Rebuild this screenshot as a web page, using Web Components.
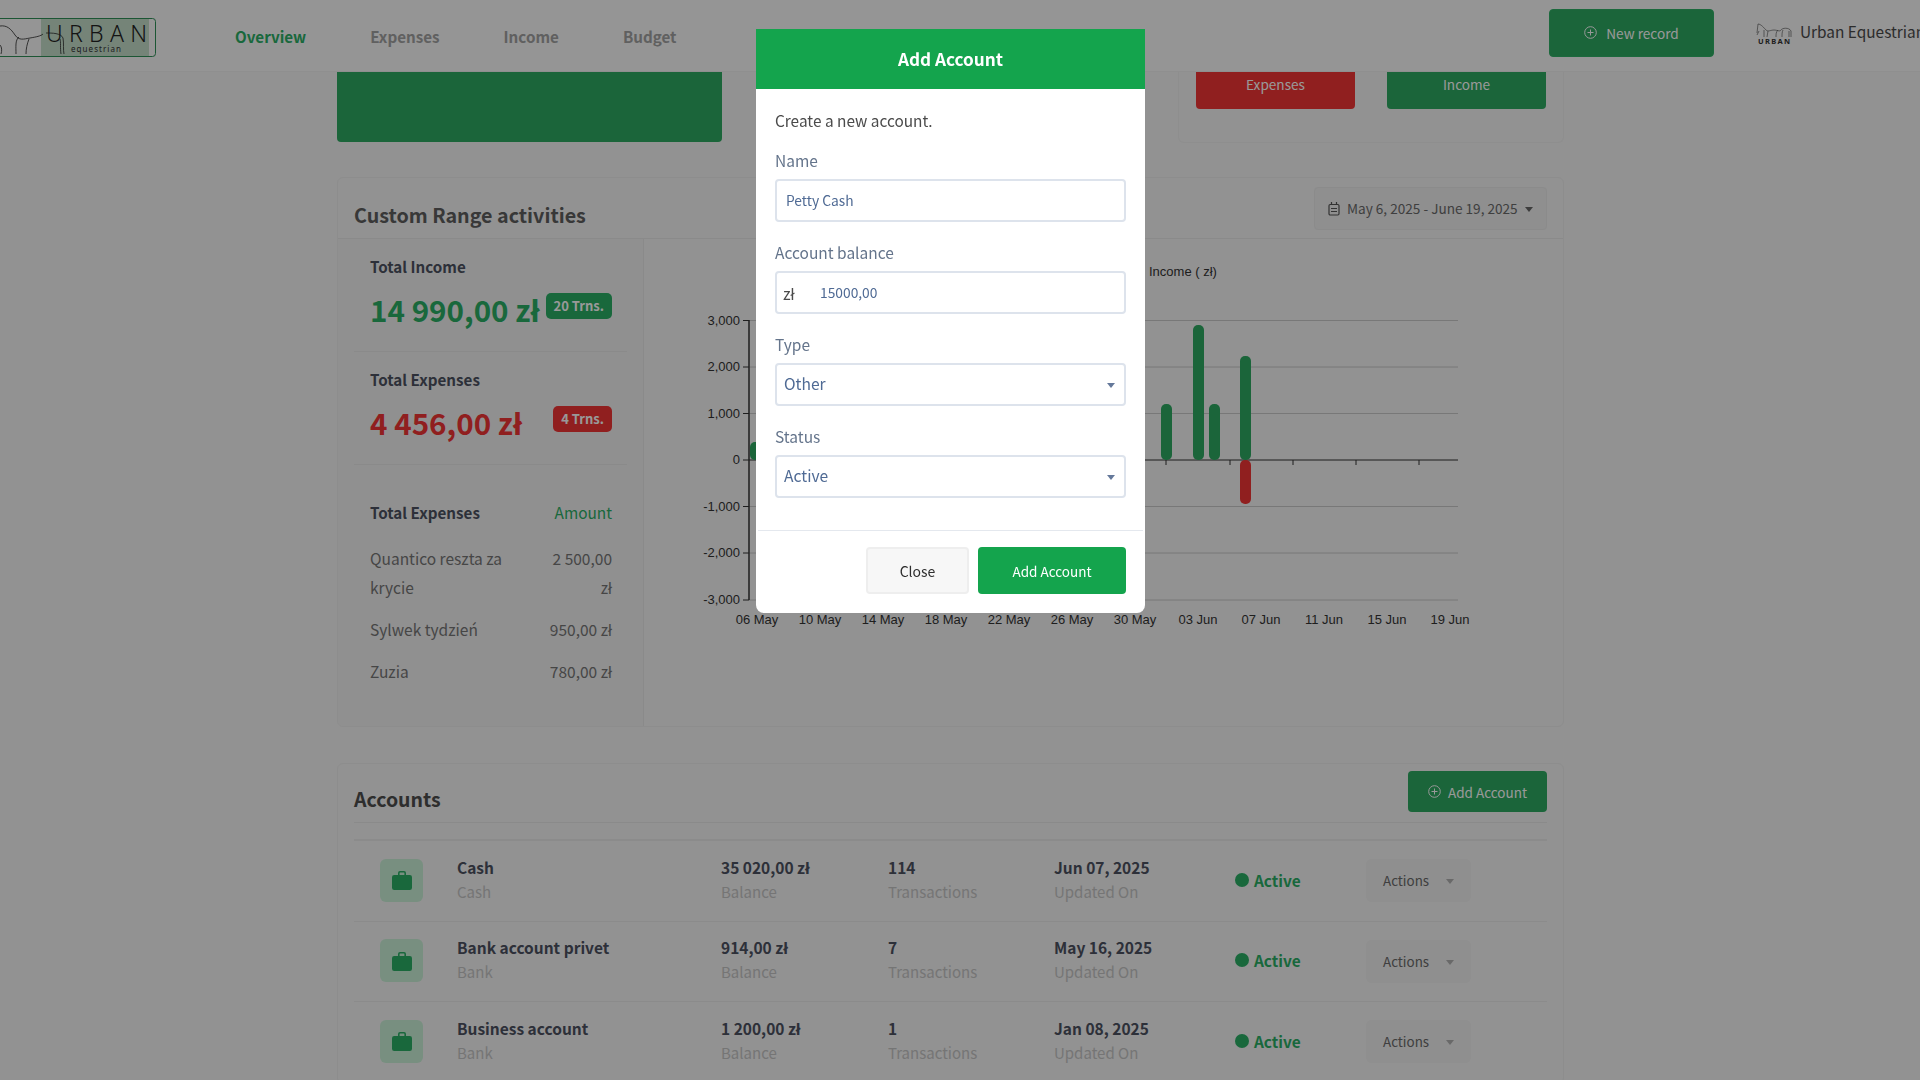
<!DOCTYPE html>
<html lang="en">
<head>
<meta charset="utf-8">
<title>Urban Equestrian - Overview</title>
<style>
    html, body { margin: 0; height: 100%; overflow: hidden; }
    body {
        background: #f3f3f3;
        color: #3f4254;
        font-family: "Noto Sans CJK SC", "Noto Sans", sans-serif;
        font-size: 16px;
    }
</style>
</head>
<body>
<top-bar></top-bar>
<main-page></main-page>
<add-account-modal></add-account-modal>

<script>
const GREEN = "#14a44d";
const PAGE_GREEN = "#2da861";
const TEXT_GREEN = "#2aad65";
const RED = "#f13535";
const PLUS_ICON = `<svg width="13" height="13" viewBox="0 0 13 13" fill="none" stroke="currentColor" stroke-width="1"><circle cx="6.5" cy="6.5" r="5.8"/><path d="M6.5 3.5v6M3.5 6.5h6"/></svg>`;

class TopBar extends HTMLElement {
    constructor() {
        super();
        const shadow = this.attachShadow({ mode: "open" });
        const temp = document.createElement("template");
        temp.innerHTML = `
            <style>
                :host {
                    display: flex;
                    align-items: center;
                    position: relative;
                    z-index: 2;
                    box-sizing: border-box;
                    height: 72px;
                    background: #f8f8f8;
                    border-bottom: 1px solid #efefef;
                    overflow: hidden;
                    white-space: nowrap;
                }
                .logo { flex: none; width: 156px; height: 39px; margin-top: 3px; }
                nav { display: flex; gap: 64px; margin-left: 79px; flex: 1; }
                nav span { font-size: 15.2px; line-height: 24px; font-weight: 600; color: #a0a0a0; }
                nav span.on { color: ${TEXT_GREEN}; }
                .record {
                    flex: none;
                    box-sizing: border-box;
                    display: flex; align-items: center; justify-content: center; gap: 9px;
                    width: 165px; height: 48px;
                    margin-top: -6px;
                    background: ${PAGE_GREEN};
                    border: 1px solid #2fb066;
                    border-radius: 4px;
                    color: #fff;
                    font-size: 13.6px;
                }
                .user { flex: none; display: flex; align-items: center; margin-left: 42px; width: 164px; }
                .user svg { flex: none; }
                .user span { font-size: 15.4px; line-height: 24px; color: #4a4a4a; margin-left: 8px; margin-top: -10px; }
            </style>
            <svg class="logo" viewBox="0 0 156 39">
                <rect x="41" y="1" width="108" height="37" fill="#c3dcc9"/>
                <rect x="-8" y=".5" width="163.5" height="38" rx="3" fill="none" stroke="#2f8f58" stroke-width="1"/>
                <g fill="none" stroke="#2a2a2a" stroke-width=".8">
                    <path d="M0 8c7-1 11 3 15 9s9 4 15 3 11-2 13-4"/>
                    <path d="M46 15c6 0 15 0 17 5 1 5 0 12 1 16"/>
                    <path d="M0 27c2 2 2 6 1 9"/>
                    <path d="M19 19c-4 3-3 10-3 17"/>
                    <path d="M29 21c-2 5-3 10-3 15"/>
                    <path d="M60 21c1 3 0 9 1 15"/>
                </g>
                <text x="46" y="24" font-family="Noto Sans" font-weight="300" font-size="23" textLength="101" lengthAdjust="spacing" fill="#222">URBAN</text>
                <text x="71" y="33.500" font-family="Noto Sans" font-size="8" textLength="50" lengthAdjust="spacing" fill="#333">equestrian</text>
            </svg>
            <nav><span class="on">Overview</span><span>Expenses</span><span>Income</span><span>Budget</span></nav>
            <div class="record">${PLUS_ICON}<span>New record</span></div>
            <div class="user">
                <svg width="36" height="25" viewBox="0 0 36 25">
                    <g fill="none" stroke="#444" stroke-width=".6">
                        <path d="M1 10 2 1c3 0 6 4 8 6s5 0 8 0 6 2 7 0 8-3 10 1v6"/>
                        <path d="M3 8 1 12M8 7v7M12 8 11 14M22 7c-2 2-2 4-2 7M27 7c-1 2-1 4-1 7M33 8v6"/>
                    </g>
                    <text x="2" y="21" font-family="Noto Sans" font-weight="700" font-size="7.5" textLength="32" lengthAdjust="spacing" fill="#333">URBAN</text>
                </svg>
                <span>Urban Equestrian</span>
            </div>
        `;
        shadow.appendChild(temp.content.cloneNode(true));
    }
}

class SummaryRow extends HTMLElement {
    constructor() {
        super();
        const shadow = this.attachShadow({ mode: "open" });
        const temp = document.createElement("template");
        temp.innerHTML = `
            <style>
                :host { display: block; position: relative; height: 71px; }
                .green {
                    position: absolute; left: 337px; top: 0;
                    box-sizing: border-box;
                    width: 385px; height: 70px;
                    background: ${PAGE_GREEN};
                    border-radius: 0 0 4px 4px;
                }
                .quick {
                    position: absolute; left: 1178px; top: 0;
                    box-sizing: border-box;
                    width: 386px; height: 71px;
                    padding: 0 17px;
                    display: flex; gap: 32px; align-items: flex-start;
                    border: 1px solid #ededed; border-top: 0;
                    border-radius: 0 0 6px 6px;
                }
                .quick span {
                    width: 160px; height: 37px;
                    display: flex; justify-content: center;
                    border-radius: 0 0 4px 4px;
                    color: #fff;
                    font-size: 13.6px;
                    line-height: 25px;
                }
                .red { background: ${RED}; }
                .inc { background: ${PAGE_GREEN}; }
            </style>
            <div class="green"></div>
            <div class="quick"><span class="red">Expenses</span><span class="inc">Income</span></div>
        `;
        shadow.appendChild(temp.content.cloneNode(true));
    }
}

class StatBlock extends HTMLElement {
    static observedAttributes = ["label", "value", "badge", "tone"];

    constructor() {
        super();
        const shadow = this.attachShadow({ mode: "open" });
        const temp = document.createElement("template");
        temp.innerHTML = `
            <style>
                :host {
                    display: block;
                    box-sizing: border-box;
                    height: 113px;
                    padding: 15px 15px 0 16px;
                    border-bottom: 1px solid #e6e6e6;
                    white-space: nowrap;
                }
                .label { font-size: 15.2px; line-height: 24px; font-weight: 600; color: #4b5060; }
                .row { display: flex; justify-content: space-between; margin-top: 11.5px; }
                .value { font-size: 29.6px; line-height: 40px; font-weight: 700; }
                .badge {
                    height: 26px; padding: 0 8px; margin-top: 3px;
                    display: flex; align-items: center;
                    border-radius: 5px;
                    color: #fff;
                    font-size: 13px; font-weight: 700;
                }
            </style>
            <div class="label"></div>
            <div class="row"><div class="value"></div><div class="badge"></div></div>
        `;
        shadow.appendChild(temp.content.cloneNode(true));
    }

    attributeChangedCallback(name, _, newValue) {
        const root = this.shadowRoot;
        if (name == "label") root.querySelector(".label").textContent = newValue;
        if (name == "value") root.querySelector(".value").textContent = newValue;
        if (name == "badge") root.querySelector(".badge").textContent = newValue;
        if (name == "tone") {
            const colour = newValue == "red" ? RED : TEXT_GREEN;
            root.querySelector(".value").style.color = colour;
            root.querySelector(".badge").style.background = colour;
        }
    }
}

class ExpenseRow extends HTMLElement {
    constructor() {
        super();
        const shadow = this.attachShadow({ mode: "open" });
        const temp = document.createElement("template");
        temp.innerHTML = `
            <style>
                :host {
                    display: flex; justify-content: space-between;
                    font-size: 15.5px; line-height: 29px;
                    color: #757575;
                }
                .name { width: 150px; }
                .amount { width: 68px; text-align: right; }
            </style>
            <div class="name"></div><div class="amount"></div>
        `;
        shadow.appendChild(temp.content.cloneNode(true));
    }

    connectedCallback() {
        this.shadowRoot.querySelector(".name").textContent = this.getAttribute("name");
        this.shadowRoot.querySelector(".amount").textContent = this.getAttribute("amount");
    }
}

class IncomeChart extends HTMLElement {
    constructor() {
        super();
        const shadow = this.attachShadow({ mode: "open" });
        const ys = { 3000: 320.5, 2000: 367, 1000: 413.5, 0: 460, "-1000": 506.5, "-2000": 553, "-3000": 600 };
        let grid = "";
        for (const v of [3000, 2000, 1000, 0, -1000, -2000, -3000]) {
            const y = ys[v];
            const label = v.toLocaleString("en-US");
            grid += `<line x1="743" x2="749" y1="${y}" y2="${y}" stroke="#333"/>`;
            grid += `<line x1="749" x2="1458" y1="${y}" y2="${y}" stroke="${v == 0 ? "#333" : "#c8c8c8"}"/>`;
            grid += `<text x="740" y="${y + 4}" text-anchor="end">${label}</text>`;
        }
        const dates = ["06 May", "10 May", "14 May", "18 May", "22 May", "26 May", "30 May", "03 Jun", "07 Jun", "11 Jun", "15 Jun", "19 Jun"];
        let xLabels = "";
        dates.forEach((d, i) => {
            xLabels += `<text x="${757 + i * 63}" y="624" text-anchor="middle">${d}</text>`;
        });
        let ticks = "";
        for (const x of [1166, 1230, 1293, 1356, 1419]) {
            ticks += `<line x1="${x}" x2="${x}" y1="460" y2="465" stroke="#333"/>`;
        }
        const bar = (x, y, h, fill) => `<rect x="${x}" y="${y}" width="11" height="${h}" rx="5" fill="${fill}"/>`;
        const temp = document.createElement("template");
        temp.innerHTML = `
            <style>
                :host { display: block; flex: 1; min-width: 0; }
                svg { display: block; font-family: "Liberation Sans", Arial, sans-serif; font-size: 13px; fill: #333; }
            </style>
            <svg width="920" height="487" viewBox="644 239 920 487">
                <text x="1149" y="276" font-size="13">Income ( zł)</text>
                ${grid}
                <line x1="749" x2="749" y1="320" y2="600" stroke="#333" stroke-width="1.5"/>
                ${ticks}
                ${bar(750, 442, 18, PAGE_GREEN)}
                ${bar(1161, 404, 56, PAGE_GREEN)}
                ${bar(1193, 325, 135, PAGE_GREEN)}
                ${bar(1209, 404, 56, PAGE_GREEN)}
                ${bar(1240, 356, 104, PAGE_GREEN)}
                ${bar(1240, 460, 44, RED)}
                ${xLabels}
            </svg>
        `;
        shadow.appendChild(temp.content.cloneNode(true));
    }
}

class RangeCard extends HTMLElement {
    constructor() {
        super();
        const shadow = this.attachShadow({ mode: "open" });
        const temp = document.createElement("template");
        temp.innerHTML = `
            <style>
                :host {
                    display: block;
                    box-sizing: border-box;
                    width: 1227px; height: 550px;
                    margin: 34px 0 0 337px;
                    border: 1px solid #ebebeb;
                    border-radius: 6px;
                }
                .head {
                    box-sizing: border-box;
                    height: 61px;
                    padding: 9px 16px 0 16px;
                    display: flex; justify-content: space-between; align-items: flex-start;
                    border-bottom: 1px solid #e6e6e6;
                }
                h2 { margin: 13px 0 0; font-size: 19.7px; line-height: 30px; font-weight: 600; color: #5e5e5e; }
                .range {
                    box-sizing: border-box;
                    display: flex; align-items: center; gap: 7px;
                    width: 233px; height: 43px;
                    padding-left: 13px;
                    background: #eeeeee;
                    border: 1px solid #e8e8e8;
                    border-radius: 4px;
                    font-size: 13.6px;
                    color: #6a6a6a;
                    white-space: nowrap;
                }
                .range span { margin-top: -1px; }
                .caret { width: 0; height: 0; border: 4px solid transparent; border-top: 5px solid #666; margin-top: 5px; }
                .body { display: flex; height: 487px; }
                .side {
                    flex: none;
                    box-sizing: border-box;
                    width: 306px;
                    padding: 0 16px;
                    background: #f0f0f0;
                    border-right: 1px solid #e6e6e6;
                    border-radius: 0 0 0 6px;
                }
                .head2 {
                    display: flex; justify-content: space-between;
                    padding: 35px 15px 0 16px;
                    margin-bottom: 20px;
                    font-size: 15.2px; line-height: 24px;
                }
                .head2 b { font-weight: 600; color: #4b5060; }
                .head2 span { color: ${TEXT_GREEN}; font-size: 15.4px; }
                .rows { display: flex; flex-direction: column; gap: 13px; padding: 0 15px 0 16px; }
            </style>
            <div class="head">
                <h2>Custom Range activities</h2>
                <div class="range">
                    <svg width="12" height="14" viewBox="0 0 12 14" fill="none" stroke="#555" stroke-width="1.2"><rect x="1" y="2.5" width="10" height="10.5" rx="1.2"/><path d="M3.5 0v3M8.5 0v3M3 6.5h6M3 9.5h6"/></svg>
                    <span>May 6, 2025 - June 19, 2025</span>
                    <i class="caret"></i>
                </div>
            </div>
            <div class="body">
                <div class="side">
                    <stat-block label="Total Income" value="14 990,00 zł" badge="20 Trns." tone="green"></stat-block>
                    <stat-block label="Total Expenses" value="4 456,00 zł" badge="4 Trns." tone="red"></stat-block>
                    <div class="head2"><b>Total Expenses</b><span>Amount</span></div>
                    <div class="rows">
                        <expense-row name="Quantico reszta za krycie" amount="2 500,00 zł"></expense-row>
                        <expense-row name="Sylwek tydzień" amount="950,00 zł"></expense-row>
                        <expense-row name="Zuzia" amount="780,00 zł"></expense-row>
                    </div>
                </div>
                <income-chart></income-chart>
            </div>
        `;
        shadow.appendChild(temp.content.cloneNode(true));
    }
}

class AccountRow extends HTMLElement {
    constructor() {
        super();
        const shadow = this.attachShadow({ mode: "open" });
        const temp = document.createElement("template");
        temp.innerHTML = `
            <style>
                :host {
                    display: grid;
                    grid-template-columns: 77px 264px 167px 166px 181px 131px 105px;
                    align-items: center;
                    box-sizing: border-box;
                    height: 80.5px;
                    padding-left: 26px;
                    border-bottom: 1px solid #e8e8e8;
                }
                .tile {
                    width: 43px; height: 43px;
                    margin-top: -1px;
                    display: flex; align-items: center; justify-content: center;
                    background: #c8efd6;
                    border-radius: 6px;
                }
                .cell { margin-top: -3px; }
                b { display: block; font-size: 15.5px; line-height: 24px; font-weight: 700; color: #4b5060; white-space: nowrap; }
                small { display: block; margin-top: 1px; font-size: 15px; line-height: 24px; color: #c4c4c4; font-weight: 400; white-space: nowrap; }
                .status { display: flex; align-items: center; gap: 5px; color: ${TEXT_GREEN}; font-size: 15.4px; font-weight: 700; }
                .status i { width: 14px; height: 14px; border-radius: 50%; background: ${TEXT_GREEN}; margin-top: -2px; }
                .status span { margin-top: -2px; }
                .actions {
                    box-sizing: border-box;
                    width: 105px; height: 43px;
                    padding: 0 17px 0 17px;
                    display: flex; align-items: center; justify-content: space-between;
                    background: #eeeeee;
                    border-radius: 6px;
                    color: #6a6a6a;
                    font-size: 13.4px;
                }
                .actions span { margin-top: -1px; }
                .actions i { width: 0; height: 0; border: 4px solid transparent; border-top: 5px solid #b0b0b0; margin-top: 6px; }
            </style>
            <div class="tile">
                <svg width="20" height="20" viewBox="0 0 20 20" fill="${TEXT_GREEN}"><path d="M6 6V3a2 2 0 0 1 2-2h4a2 2 0 0 1 2 2v3h-1.600V3a.5.5 0 0 0-.5-.5H8.100a.5.5 0 0 0-.5.5v3z"/><rect y="5" width="20" height="15" rx="2.200"/></svg>
            </div>
            <div class="cell"><b class="name"></b><small class="kind"></small></div>
            <div class="cell"><b class="balance"></b><small>Balance</small></div>
            <div class="cell"><b class="count"></b><small>Transactions</small></div>
            <div class="cell"><b class="date"></b><small>Updated On</small></div>
            <div class="status"><i></i><span>Active</span></div>
            <div class="actions"><span>Actions</span><i></i></div>
        `;
        shadow.appendChild(temp.content.cloneNode(true));
    }

    connectedCallback() {
        for (const key of ["name", "kind", "balance", "count", "date"]) {
            this.shadowRoot.querySelector("." + key).textContent = this.getAttribute(key);
        }
    }
}

class AccountsCard extends HTMLElement {
    constructor() {
        super();
        const shadow = this.attachShadow({ mode: "open" });
        const temp = document.createElement("template");
        temp.innerHTML = `
            <style>
                :host {
                    display: block;
                    box-sizing: border-box;
                    width: 1227px;
                    margin: 36px 0 0 337px;
                    padding: 7px 16px 0;
                    border: 1px solid #ebebeb;
                    border-radius: 6px;
                }
                .head {
                    display: flex; justify-content: space-between; align-items: flex-start;
                    height: 51px;
                    border-bottom: 1px solid #e6e6e6;
                }
                h2 { margin: 13px 0 0; font-size: 19.5px; line-height: 30px; font-weight: 600; color: #4d4d4d; }
                .add {
                    box-sizing: border-box;
                    display: flex; align-items: center; justify-content: center; gap: 7px;
                    width: 139px; height: 41px;
                    background: ${PAGE_GREEN};
                    border-radius: 4px;
                    color: #fff;
                    font-size: 13.5px;
                }
                .rule { height: 16px; border-bottom: 2px solid #e8e8e8; }
            </style>
            <div class="head"><h2>Accounts</h2><div class="add">${PLUS_ICON}<span>Add Account</span></div></div>
            <div class="rule"></div>
            <slot></slot>
        `;
        shadow.appendChild(temp.content.cloneNode(true));
    }
}

class MainPage extends HTMLElement {
    constructor() {
        super();
        const shadow = this.attachShadow({ mode: "open" });
        const temp = document.createElement("template");
        temp.innerHTML = `
            <style>:host { display: block; }</style>
            <summary-row></summary-row>
            <range-card></range-card>
            <accounts-card>
                <account-row name="Cash" kind="Cash" balance="35 020,00 zł" count="114" date="Jun 07, 2025"></account-row>
                <account-row name="Bank account privet" kind="Bank" balance="914,00 zł" count="7" date="May 16, 2025"></account-row>
                <account-row name="Business account" kind="Bank" balance="1 200,00 zł" count="1" date="Jan 08, 2025"></account-row>
            </accounts-card>
        `;
        shadow.appendChild(temp.content.cloneNode(true));
    }
}

class FormField extends HTMLElement {
    connectedCallback() {
        const shadow = this.attachShadow({ mode: "open" });
        const prefix = this.getAttribute("prefix");
        const select = this.hasAttribute("select");
        const temp = document.createElement("template");
        temp.innerHTML = `
            <style>
                :host { display: block; }
                label { display: block; height: 24px; font-size: 15.5px; line-height: 22px; color: #64748b; margin-bottom: 6px; }
                .box {
                    box-sizing: border-box;
                    height: 43px;
                    display: flex; align-items: center;
                    background: #fff;
                    border: 2px solid #dde3ec;
                    border-radius: 4px;
                    color: #4f6a94;
                    font-size: 13.8px;
                    padding-left: 9px;
                }
                .box.sel { font-size: 15.6px; padding-left: 7px; padding-right: 9px; justify-content: space-between; }
                .pre { width: 37px; flex: none; color: #4b4b4b; margin-left: -3px; font-size: 16px; }
                .val { margin-top: -1px; }
                .sel .val { margin-top: -3px; }
                .sel i { width: 0; height: 0; border: 4px solid transparent; border-top: 5px solid #64789a; margin-top: 5px; }
            </style>
            <label></label>
            <div class="box ${select ? "sel" : ""}">
                ${prefix ? `<span class="pre">${prefix}</span>` : ""}
                <span class="val"></span>
                ${select ? "<i></i>" : ""}
            </div>
        `;
        shadow.appendChild(temp.content.cloneNode(true));
        shadow.querySelector("label").textContent = this.getAttribute("label");
        shadow.querySelector(".val").textContent = this.getAttribute("value");
    }
}

class AddAccountModal extends HTMLElement {
    constructor() {
        super();
        const shadow = this.attachShadow({ mode: "open" });
        const temp = document.createElement("template");
        temp.innerHTML = `
            <style>
                :host {
                    position: fixed; inset: 0;
                    z-index: 10;
                    display: flex; justify-content: center; align-items: flex-start;
                    box-sizing: border-box;
                    padding: 29px 19px 0 0;
                    background: rgba(0, 0, 0, .4);
                }
                .dialog {
                    width: 389px; height: 584px;
                    background: #fff;
                    border-radius: 0 0 8px 8px;
                    overflow: hidden;
                }
                header {
                    height: 60px;
                    display: flex; align-items: center; justify-content: center;
                    background: ${GREEN};
                    color: #fff;
                    font-size: 17.2px; font-weight: 700;
                    padding-bottom: 2px;
                    box-sizing: border-box;
                }
                .body { padding: 19px 19px 0; display: flex; flex-direction: column; gap: 19px; }
                p { margin: 0 0 -2px; height: 24px; font-size: 15.4px; line-height: 24px; color: #4b4b4b; }
                footer {
                    display: flex; justify-content: flex-end; gap: 9px;
                    margin: 32px 2px 0;
                    padding: 16px 17px 0 0;
                    border-top: 1px solid #e4e8ee;
                }
                footer span {
                    box-sizing: border-box;
                    height: 47px;
                    display: flex; align-items: center; justify-content: center;
                    border-radius: 4px;
                }
                .close { width: 103px; background: #f7f7f7; border: 2px solid #eeeeee; color: #2f2f2f; font-size: 14px; }
                .save { width: 148px; background: ${GREEN}; color: #fff; font-size: 13.5px; }
            </style>
            <div class="dialog">
                <header>Add Account</header>
                <div class="body">
                    <p>Create a new account.</p>
                    <form-field label="Name" value="Petty Cash"></form-field>
                    <form-field label="Account balance" prefix="zł" value="15000,00"></form-field>
                    <form-field label="Type" value="Other" select></form-field>
                    <form-field label="Status" value="Active" select></form-field>
                </div>
                <footer><span class="close">Close</span><span class="save">Add Account</span></footer>
            </div>
        `;
        shadow.appendChild(temp.content.cloneNode(true));
    }
}

customElements.define("top-bar", TopBar);
customElements.define("summary-row", SummaryRow);
customElements.define("stat-block", StatBlock);
customElements.define("expense-row", ExpenseRow);
customElements.define("income-chart", IncomeChart);
customElements.define("range-card", RangeCard);
customElements.define("account-row", AccountRow);
customElements.define("accounts-card", AccountsCard);
customElements.define("main-page", MainPage);
customElements.define("form-field", FormField);
customElements.define("add-account-modal", AddAccountModal);
</script>
</body>
</html>
